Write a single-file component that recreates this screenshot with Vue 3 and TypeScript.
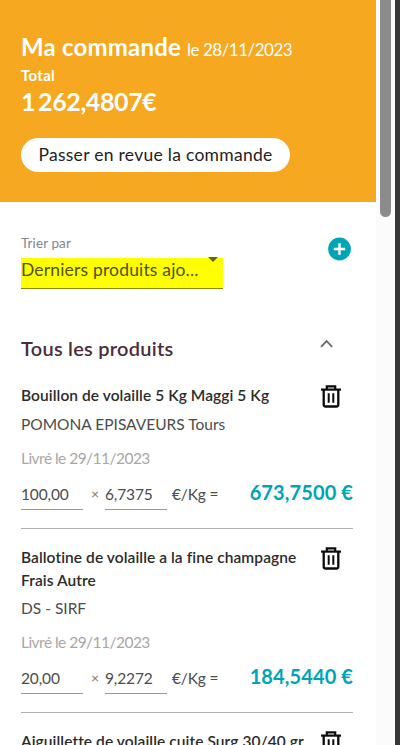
<script setup lang="ts">
interface Product {
  name: string
  supplier: string
  delivery: string
  quantity: string
  price: string
  total: string
}

const products: Product[] = [
  { name: 'Bouillon de volaille 5 Kg Maggi 5 Kg', supplier: 'POMONA EPISAVEURS Tours', delivery: 'Livré le 29/11/2023', quantity: '100,00', price: '6,7375', total: '673,7500 €' },
  { name: 'Ballotine de volaille a la fine champagne Frais Autre', supplier: 'DS - SIRF', delivery: 'Livré le 29/11/2023', quantity: '20,00', price: '9,2272', total: '184,5440 €' },
  { name: 'Aiguillette de volaille cuite Surg 30/40 gr', supplier: '', delivery: '', quantity: '', price: '', total: '' },
]
</script>

<template>
  <div class="screen">
    <main class="panel">
      <header class="summary">
        <h1 class="title"><span class="title-main">Ma commande</span><span class="title-date">le 28/11/2023</span></h1>
        <div class="total-label">Total</div>
        <div class="total-value"><span class="thousands">1</span>262,4807€</div>
        <button class="review"><span class="review-text">Passer en revue la commande</span></button>
      </header>

      <section class="sorting">
        <div class="sort-field">
          <div class="sort-label">Trier par</div>
          <div class="select">
            <span class="select-text">Derniers produits ajo...</span>
            <svg class="caret" width="10" height="5" viewBox="0 0 10 5"><path d="M0 0h10L5 5z" fill="#66660a" /></svg>
          </div>
        </div>
        <svg class="add" width="24" height="24" viewBox="0 0 24 24">
          <circle cx="11.500" cy="12" r="11.4" fill="#00a5b5" />
          <path d="M11.500 6.3v11.4M5.800 12h11.4" stroke="#fff" stroke-width="2.400" />
        </svg>
      </section>

      <div class="group">
        <h2 class="group-title">Tous les produits</h2>
        <svg class="chevron" width="14" height="9" viewBox="0 0 14 9"><path d="M1 7.800 6.600 2l5.600 5.800" fill="none" stroke="#6c6c6c" stroke-width="1.900" /></svg>
      </div>

      <article v-for="p in products" :key="p.name" class="product">
        <div class="product-head">
          <h3 class="name">{{ p.name }}</h3>
          <svg class="trash" width="20" height="23" viewBox="0 0 20 23" fill="none" stroke="#0b0b0b">
            <path d="M0 4.600h20" stroke-width="2.200" />
            <path d="M5.800 4.500V1.300h8.400v3.200" stroke-width="2.200" />
            <path d="M2.700 5v14.500q0 2 2 2h10.600q2 0 2-2V5" stroke-width="2.300" />
            <path d="M7.700 8.300v9.400M12.300 8.300v9.400" stroke-width="2" />
          </svg>
        </div>
        <template v-if="p.supplier">
          <div class="supplier">{{ p.supplier }}</div>
          <div class="delivery">{{ p.delivery }}</div>
          <div class="line">
            <span class="field">{{ p.quantity }}</span>
            <span class="times">×</span>
            <span class="field">{{ p.price }}</span>
            <span class="unit">€/Kg =</span>
            <strong class="amount">{{ p.total }}</strong>
          </div>
        </template>
      </article>
    </main>
    <div class="gutter"><div class="thumb"></div></div>
    <div class="edge"></div>
  </div>
</template>

<style>
body {
  overflow: hidden;
}
</style>

<style scoped>
.screen {
  display: flex;
  width: 400px;
  height: 745px;
  overflow: hidden;
  background: #fff;
  color: #303030;
  font-family: Lato, "Liberation Sans", sans-serif;
  font-variant-ligatures: none;
}
h1, h2, h3 {
  margin: 0;
}
.panel {
  width: 376px;
  height: 745px;
  overflow: hidden;
}
.summary {
  box-sizing: border-box;
  height: 202px;
  padding: 33px 21px 0;
  background: #f6a821;
  color: #fff;
}
.title {
  display: flex;
  align-items: baseline;
  gap: 6px;
  height: 28px;
  line-height: 28px;
  white-space: nowrap;
}
.title-main {
  font-size: 24px;
  font-weight: 700;
  letter-spacing: 0.2px;
}
.title-date {
  font-size: 17px;
  font-weight: 400;
  letter-spacing: -0.5px;
}
.total-label {
  margin-top: 4px;
  font-size: 15px;
  font-weight: 700;
  line-height: 20px;
  letter-spacing: 0.3px;
}
.total-value {
  margin-top: 2px;
  font-size: 25px;
  font-weight: 700;
  line-height: 28px;
  letter-spacing: -0.4px;
  white-space: nowrap;
}
.thousands {
  margin-right: 3px;
}
.review {
  display: flex;
  align-items: center;
  justify-content: center;
  width: 269px;
  height: 34px;
  margin-top: 23px;
  padding: 0 0 2px;
  border: 0;
  border-radius: 17px;
  background: #fff;
  color: #222;
  font-family: inherit;
  font-size: 17.5px;
  letter-spacing: 0.28px;
  white-space: nowrap;
}
.sorting {
  display: flex;
  justify-content: space-between;
  height: 54px;
  padding: 33px 24px 0 21px;
}
.sort-field {
  width: 202px;
}
.sort-label {
  height: 22px;
  color: #858585;
  font-size: 13.5px;
  line-height: 17px;
  letter-spacing: 0.1px;
}
.select {
  display: flex;
  justify-content: space-between;
  box-sizing: border-box;
  height: 32px;
  padding-right: 5px;
  border-bottom: 1px solid #8a8a00;
  background: linear-gradient(#fff 1px, #ff0 1px);
  color: #505000;
  font-size: 17.5px;
  line-height: 26px;
  letter-spacing: 0.17px;
  white-space: nowrap;
}
.add {
  margin-top: 2px;
}
.group {
  display: flex;
  align-items: flex-start;
  justify-content: space-between;
  height: 46px;
  padding: 32px 42px 0 21px;
}
.group-title {
  color: #4b2c38;
  font-size: 20px;
  font-weight: 600;
  line-height: 54px;
  letter-spacing: 0.25px;
  white-space: nowrap;
}
.chevron {
  margin-top: 18px;
}
.product {
  margin: 0 23px 0 21px;
  padding: 17px 0 18px;
  border-bottom: 1px solid #b3afaf;
  font-size: 15.5px;
  line-height: 23px;
}
.product-head {
  display: flex;
  justify-content: space-between;
  padding-right: 12px;
}
.name {
  width: 290px;
  font-size: 15.5px;
  font-weight: 600;
  color: #2b2b2b;
  letter-spacing: 0.08px;
}
.trash {
  flex: none;
  margin-top: 1px;
}
.supplier {
  margin-top: 5px;
  color: #4c4c4c;
}
.delivery {
  margin-top: 11px;
  color: #aaa6a6;
  letter-spacing: -0.53px;
}
.line {
  display: flex;
  height: 32px;
  margin-top: 8px;
  line-height: 32px;
  color: #4c4c4c;
  white-space: nowrap;
}
.field {
  box-sizing: border-box;
  width: 62px;
  border-bottom: 1px solid #999;
  letter-spacing: -0.15px;
}
.times {
  width: 22px;
  padding-left: 8px;
  box-sizing: border-box;
  color: #777;
  font-size: 14px;
}
.unit {
  margin-left: 5px;
  letter-spacing: -0.15px;
}
.amount {
  margin-left: auto;
  color: #00a5b5;
  font-size: 20px;
  font-weight: 700;
  line-height: 28px;
  letter-spacing: 0.1px;
}
.gutter {
  box-sizing: border-box;
  width: 19px;
  padding-left: 4px;
  background: #fbfbfb;
}
.thumb {
  width: 11px;
  height: 217px;
  border-radius: 0 0 6px 6px;
  background: #8b8b8b;
}
.edge {
  width: 5px;
  background: #38383a;
}
</style>
